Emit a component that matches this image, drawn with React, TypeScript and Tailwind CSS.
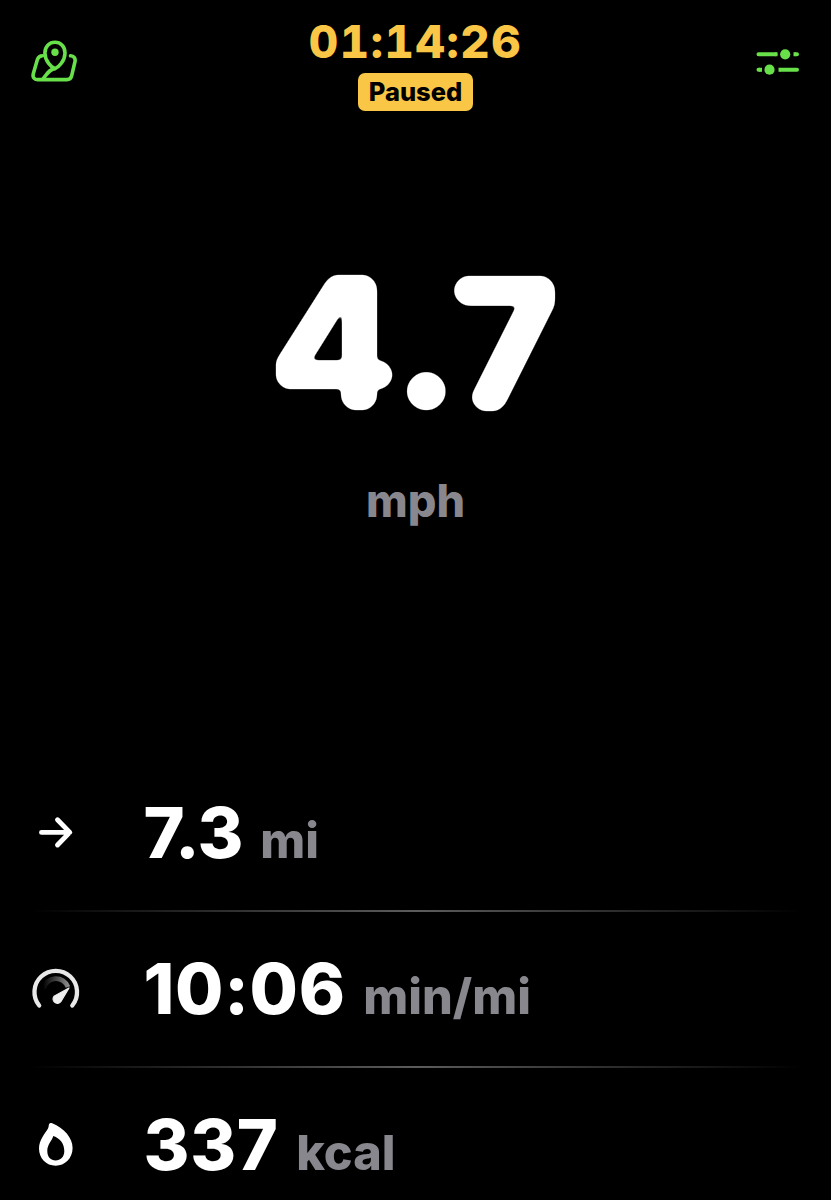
import React from "react";

function MapPinIcon() {
  return (
    <svg width="46" height="44" viewBox="0 0 46 44" fill="none" stroke="#68e04a" strokeWidth="3.6" strokeLinecap="round" strokeLinejoin="round">
      <path d="M11.5 15.8C9 15.8 7.3 17 6.4 19.5L2.3 33.7C1.4 37.2 3.2 39.6 6.5 39.6H36C38.3 39.6 39.9 38.5 40.5 36.3L43.9 22C44.8 18.5 43 16 39.5 15.8" />
      <path d="M24 28.6C20.5 27.5 13.9 20.8 13.9 12.9C13.9 6.6 18.3 2.3 24 2.3C29.7 2.3 34 6.6 34 12.9C34 20.8 27.5 27.5 24 28.6Z" />
      <path d="M24 28.6C18.8 28.8 16 34 12 38.8" />
      <circle cx="24" cy="12.3" r="3.7" fill="#68e04a" stroke="none" />
    </svg>
  );
}

function SlidersIcon() {
  return (
    <svg width="44" height="28" viewBox="0 0 44 28" fill="none" stroke="#68e04a" strokeWidth="4" strokeLinecap="round">
      <path d="M2.5 6.3H19.5M40 6.3H41" />
      <path d="M37.5 6.3H40M19 6.3H21.5M3 21.7H6M22.5 21.7H25" strokeLinecap="butt" />
      <path d="M2.5 21.7H3.3M25 21.7H41" />
      <circle cx="29.2" cy="6.3" r="5.1" fill="#68e04a" stroke="none" />
      <circle cx="13.5" cy="21.7" r="5.1" fill="#68e04a" stroke="none" />
    </svg>
  );
}

function ArrowIcon() {
  return (
    <svg width="50" height="50" viewBox="0 0 50 50" fill="none" stroke="#fff" strokeWidth="4.9" strokeLinecap="round" strokeLinejoin="round">
      <path d="M11.5 24.4H39.5M27.5 11.8L39.8 24.4L27.5 37" />
    </svg>
  );
}

function GaugeIcon() {
  return (
    <svg width="50" height="50" viewBox="0 0 50 50" fill="none" strokeLinecap="round">
      <defs>
        <linearGradient id="gauge-sweep" x1="13" y1="0" x2="38" y2="0" gradientUnits="userSpaceOnUse">
          <stop offset="0" stopColor="#000" />
          <stop offset="1" stopColor="#888" />
        </linearGradient>
      </defs>
      <path d="M9.2 41.5A21.3 21.3 0 1 1 42.3 41.5" stroke="#e9e9e9" strokeWidth="4.3" />
      <path d="M13.5 24.5A12.8 12.8 0 0 1 38 23" stroke="url(#gauge-sweep)" strokeWidth="4.8" strokeLinecap="butt" />
      <path d="M39 24L30.8 37.7A4.3 4.3 0 1 1 24 32.3Z" fill="#f0f0f0" stroke="#f0f0f0" strokeWidth="1.2" strokeLinejoin="round" />
    </svg>
  );
}

function FlameIcon() {
  return (
    <svg width="50" height="50" viewBox="0 0 50 50">
      <path fill="#fff" fillRule="evenodd" d="M19.3 3.7C20 2.7 21 2.8 22.2 3.3C34 8.5 42.6 17.5 42.6 28C42.6 38.3 34.8 45.7 25.7 45.7C16 45.7 9 38.3 9 28.5C9 20 15 13.5 18 8.5C19 6 18.6 4.7 19.3 3.7ZM23.3 16C22 21 17.3 24 17.3 31C17.3 37 20.8 40.5 25.6 40.5C30.4 40.5 34.3 37 34.3 31C34.3 24 30.5 18.5 23.3 16Z" />
    </svg>
  );
}

// Corners of the digits are rounded by shrinking them and growing them back with a disk.
const ROUNDING = 13;
const ring = (radius: number, count: number) =>
  Array.from({ length: count }, (_, i) => {
    const angle = (i / count) * Math.PI * 2;
    return { dx: radius * Math.cos(angle), dy: radius * Math.sin(angle) };
  });
const OFFSETS = [...ring(ROUNDING, 64), ...ring(ROUNDING * 0.6, 16)];

function SpeedReadout() {
  return (
    <svg width="831" height="280" viewBox="0 200 831 280" role="img" aria-label="4.7">
      <defs>
        <filter id="soft-corners" filterUnits="userSpaceOnUse" x="240" y="240" width="350" height="200" colorInterpolationFilters="sRGB">
          <feColorMatrix in="SourceGraphic" type="matrix" values="0 0 0 0 1  0 0 0 0 1  0 0 0 0 1  1 0 0 0 0" result="core" />
          {OFFSETS.map((o, i) => (
            <feOffset key={i} in="core" dx={o.dx} dy={o.dy} result={`o${i}`} />
          ))}
          <feMerge>
            <feMergeNode in="core" />
            {OFFSETS.map((_, i) => (
              <feMergeNode key={i} in={`o${i}`} />
            ))}
          </feMerge>
          <feGaussianBlur stdDeviation="2" />
          <feComponentTransfer>
            <feFuncA type="linear" slope="5" intercept="-1.9" />
          </feComponentTransfer>
        </filter>
      </defs>
      <text
        x="268.5 390 449.5"
        y="410 408 410.5"
        filter="url(#soft-corners)"
        fill="#fff"
        stroke="#000"
        strokeWidth={ROUNDING * 2}
        strokeLinejoin="round"
        className="text-[185px] font-black"
      >
        4<tspan className="text-[206px] font-extrabold">.</tspan>7
      </text>
    </svg>
  );
}

type StatProps = { icon: React.ReactNode; value: string; unit: string; tracking?: string; divider?: boolean };

function Stat({ icon, value, unit, tracking = "tracking-[0.7px]", divider = true }: StatProps) {
  return (
    <div className="relative flex h-[156px] shrink-0 items-center px-[30px]">
      <div className="w-[113.5px] shrink-0">{icon}</div>
      <div className="flex items-baseline gap-[17.5px] whitespace-nowrap font-extrabold">
        <span className={`text-[70px] leading-none ${tracking}`}>{value}</span>
        <span className="text-[48.5px] leading-none text-[#88878d]">{unit}</span>
      </div>
      {divider && (
        <div className="absolute inset-x-[30px] -bottom-px h-[2px] bg-gradient-to-r from-transparent via-[#5c5c5c] to-transparent" />
      )}
    </div>
  );
}

export default function App() {
  return (
    <main className="flex h-[1200px] w-full flex-col overflow-hidden bg-black font-['Inter',sans-serif] text-white">
      <header className="flex h-[120px] shrink-0 items-start justify-between px-[31px]">
        <div className="w-[60px] pt-[40px]"><MapPinIcon /></div>
        <div className="flex flex-col items-center pt-[20px]">
          <div className="text-[45.5px] font-extrabold leading-[44px] tracking-[1.6px] tabular-nums text-[#f9c646]">01:14:26</div>
          <div className="mt-[9px] flex h-[38px] w-[115px] items-center justify-center rounded-[7px] bg-[#f9c646] text-[25.5px] font-extrabold text-black">Paused</div>
        </div>
        <div className="flex w-[60px] justify-end pt-[48px]"><SlidersIcon /></div>
      </header>
      <section className="flex h-[635px] shrink-0 flex-col items-center pt-[80px]">
        <SpeedReadout />
        <div className="-mt-[3px] text-[45px] font-extrabold leading-[48px] text-[#88878d]">mph</div>
      </section>
      <section className="flex flex-col">
        <Stat icon={<ArrowIcon />} value="7.3" unit="mi" tracking="tracking-[-0.8px]" />
        <Stat icon={<GaugeIcon />} value="10:06" unit="min/mi" />
        <Stat icon={<FlameIcon />} value="337" unit="kcal" divider={false} />
      </section>
    </main>
  );
}
